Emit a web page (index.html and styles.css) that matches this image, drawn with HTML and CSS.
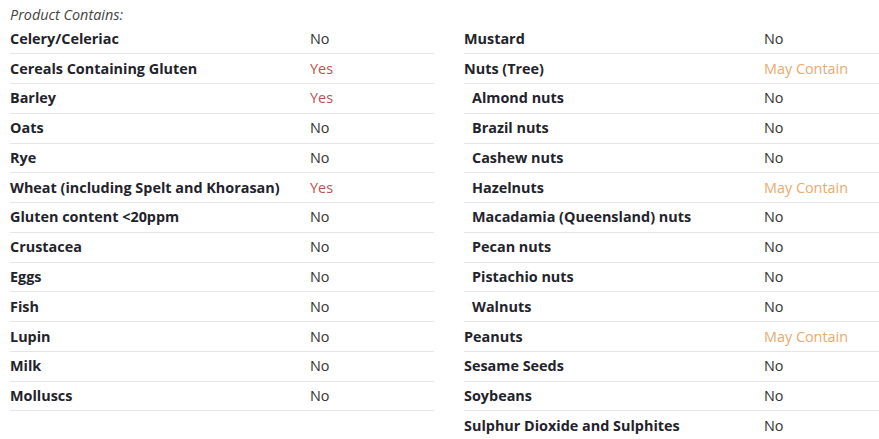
FILE: index.html
```html
<!DOCTYPE html>
<html>
<head>
<meta charset="utf-8">
<link rel="stylesheet" href="styles.css">
</head>
<body>
<div class="page">
  <div class="heading">Product Contains:</div>
  <div class="tables">
    <div class="table">
      <div class="row"><span class="label">Celery/Celeriac</span><span class="val">No</span></div>
      <div class="row"><span class="label">Cereals Containing Gluten</span><span class="val yes">Yes</span></div>
      <div class="row"><span class="label">Barley</span><span class="val yes">Yes</span></div>
      <div class="row"><span class="label">Oats</span><span class="val">No</span></div>
      <div class="row"><span class="label">Rye</span><span class="val">No</span></div>
      <div class="row"><span class="label">Wheat (including Spelt and Khorasan)</span><span class="val yes">Yes</span></div>
      <div class="row"><span class="label">Gluten content &lt;20ppm</span><span class="val">No</span></div>
      <div class="row"><span class="label">Crustacea</span><span class="val">No</span></div>
      <div class="row"><span class="label">Eggs</span><span class="val">No</span></div>
      <div class="row"><span class="label">Fish</span><span class="val">No</span></div>
      <div class="row"><span class="label">Lupin</span><span class="val">No</span></div>
      <div class="row"><span class="label">Milk</span><span class="val">No</span></div>
      <div class="row"><span class="label">Molluscs</span><span class="val">No</span></div>
    </div>
    <div class="table">
      <div class="row"><span class="label">Mustard</span><span class="val">No</span></div>
      <div class="row"><span class="label">Nuts (Tree)</span><span class="val may">May Contain</span></div>
      <div class="row"><span class="label sub">Almond nuts</span><span class="val">No</span></div>
      <div class="row"><span class="label sub">Brazil nuts</span><span class="val">No</span></div>
      <div class="row"><span class="label sub">Cashew nuts</span><span class="val">No</span></div>
      <div class="row"><span class="label sub">Hazelnuts</span><span class="val may">May Contain</span></div>
      <div class="row"><span class="label sub">Macadamia (Queensland) nuts</span><span class="val">No</span></div>
      <div class="row"><span class="label sub">Pecan nuts</span><span class="val">No</span></div>
      <div class="row"><span class="label sub">Pistachio nuts</span><span class="val">No</span></div>
      <div class="row"><span class="label sub">Walnuts</span><span class="val">No</span></div>
      <div class="row"><span class="label">Peanuts</span><span class="val may">May Contain</span></div>
      <div class="row"><span class="label">Sesame Seeds</span><span class="val">No</span></div>
      <div class="row"><span class="label">Soybeans</span><span class="val">No</span></div>
      <div class="row"><span class="label">Sulphur Dioxide and Sulphites</span><span class="val">No</span></div>
    </div>
  </div>
</div>
</body>
</html>
```
FILE: styles.css
```css
html, body {
  margin: 0;
  padding: 0;
  background: #fff;
  overflow: hidden;
}
.page {
  font-family: "Open Sans", "Liberation Sans", sans-serif;
  font-size: 14.4px;
  color: #222;
  padding: 4.5px 0 0 10px;
}
.heading {
  font-style: italic;
  color: #444;
  line-height: 20px;
}
.tables {
  display: grid;
  grid-template-columns: 424px 1fr;
  column-gap: 30px;
}
.row {
  box-sizing: border-box;
  height: 29.78px;
  display: flex;
  align-items: center;
  border-bottom: 1px solid #e6e6e6;
  line-height: 20px;
}
.label {
  width: 300px;
  flex: none;
  font-weight: 700;
  color: #1f232b;
}
.label.sub {
  padding-left: 8px;
  box-sizing: border-box;
}
.val {
  color: #333;
}
.val.yes {
  color: #b8554e;
}
.val.may {
  color: #e9aa6c;
}
```
